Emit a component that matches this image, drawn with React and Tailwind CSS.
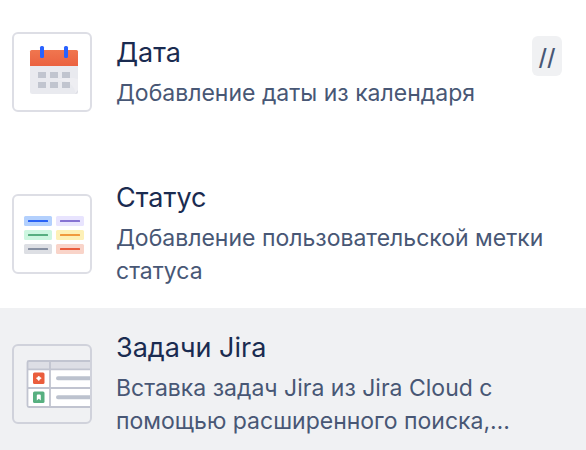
function CalendarIcon() {
  return (
    <svg viewBox="0 0 76 76" className="size-full" aria-hidden="true">
      <defs>
        <linearGradient id="calendar-head" x1="0" y1="0" x2="0" y2="1">
          <stop offset="0" stopColor="#f0764f" />
          <stop offset="1" stopColor="#eb6240" />
        </linearGradient>
      </defs>
      <path d="M16 32h48v25.500q0 2.500-2.500 2.500h-43q-2.500 0-2.500-2.500z" fill="#e9eaef" />
      <path d="M42 46q18 0 19.500 14q2.500 0 2.500-2.500V45q-10-3-22 1z" fill="#eeeef2" />
      <path d="M61 60l3-4v1.500q0 2.500-3 2.500z" fill="#dddee5" />
      <path d="M16 32V17.500q0-1.500 1.500-1.500h45q1.500 0 1.500 1.500V32z" fill="url(#calendar-head)" />
      <rect x="26" y="12" width="4" height="12" rx="1.500" fill="#2962ff" />
      <rect x="50" y="12" width="4" height="12" rx="1.500" fill="#2962ff" />
      <g fill="#c1c5cf">
        <path d="M24 38h8v6h-8zM36 38h8v6h-8zM48 38h8v6h-8z" />
        <path d="M24 48h8v6h-8zM36 48h8v6h-8zM48 48h8v6h-8z" />
      </g>
    </svg>
  );
}

function StatusIcon() {
  const chips = [
    [10, 20, "#b3d0fd", "#2962f6"],
    [42, 20, "#e8e4fe", "#8673d3"],
    [10, 34, "#cdf6e0", "#57ae80"],
    [42, 34, "#fdf0b6", "#f09a3e"],
    [10, 48, "#dddfe4", "#8790a2"],
    [42, 48, "#f9d4c9", "#ea5d3c"],
  ];
  return (
    <svg viewBox="0 0 76 76" className="size-full" aria-hidden="true">
      {chips.map(([x, y, fill, line]) => (
        <g key={fill}>
          <rect x={x} y={y} width="28" height="10" rx="1.500" fill={fill} />
          <rect x={x + 4} y={y + 4} width="20" height="2" rx="0.500" fill={line} />
        </g>
      ))}
    </svg>
  );
}

function JiraIcon() {
  return (
    <svg viewBox="0 0 76 76" className="size-full" aria-hidden="true">
      <rect x="13.500" y="15" width="70" height="46" rx="1.500" fill="#fff" />
      <path d="M13.500 15h63v8h-63z" fill="#dddee5" />
      <rect x="13.500" y="15" width="70" height="46" rx="1.500" fill="none" stroke="#c1c4d0" strokeWidth="1.800" />
      <path d="M13 23.300h63M13 42h63M36 15v46" stroke="#c1c4d0" strokeWidth="1.800" />
      <path d="M44 32.300h34M44 51.300h34" stroke="#bcc2ce" strokeWidth="4" strokeLinecap="round" />
      <rect x="19" y="26.500" width="11.500" height="11.500" rx="1.500" fill="#ea5d3c" />
      <path d="M24.800 30l1 1.200 1.500 1-1.500 1-1 1.500-1-1.300-1.500-1.200 1.500-1z" fill="#fff" stroke="#fff" strokeWidth="0.600" />
      <rect x="19" y="45.500" width="11.500" height="11.500" rx="1.500" fill="#57b080" />
      <path d="M22.800 49.500q0-1 1-1h2q1 0 1 1v5l-2-1.800-2 1.800z" fill="#fff" />
    </svg>
  );
}

const items = [
  {
    id: "date",
    title: "Дата",
    text: "Добавление даты из календаря",
    shortcut: "//",
    Icon: CalendarIcon,
    row: "mb-[26px] bg-white",
    frame: "border-[#dddee5] bg-white",
  },
  {
    id: "status",
    title: "Статус",
    text: "Добавление пользовательской метки статуса",
    Icon: StatusIcon,
    row: "bg-white",
    frame: "border-[#dddee5] bg-white",
  },
  {
    id: "jira",
    title: "Задачи Jira",
    text: "Вставка задач Jira из Jira Cloud с помощью расширенного поиска,…",
    Icon: JiraIcon,
    row: "bg-[#f0f1f3]",
    frame: "border-[#d0d2db] bg-[#f0f1f3]",
  },
];

function InsertItem({ title, text, shortcut, Icon, row, frame }) {
  return (
    <li>
      <button
        type="button"
        className={`flex w-full items-center gap-6 pb-5 pl-3 pr-6 pt-[22px] text-left ${row}`}
      >
        <span className={`size-20 shrink-0 overflow-hidden rounded-md border-2 ${frame}`}>
          <Icon />
        </span>
        <span className="min-w-0 flex-1 pt-[2px]">
          <span className="block text-[27px] leading-8 text-[#1a2b50]">{title}</span>
          <span className="mt-2 line-clamp-2 text-[23px] leading-[33px] text-[#485775]">{text}</span>
        </span>
        {shortcut && (
          <kbd className="mt-1 flex h-10 w-[30px] shrink-0 items-center justify-center self-start rounded-md bg-[#f0f1f3] pt-1 font-[Inter,sans-serif] text-[23px] font-medium text-[#485775]">
            {shortcut}
          </kbd>
        )}
      </button>
    </li>
  );
}

export default function App() {
  return (
    <main className="bg-white pt-[10px] font-[Inter,sans-serif]">
      <ul>
        {items.map((item) => (
          <InsertItem key={item.id} {...item} />
        ))}
      </ul>
    </main>
  );
}
